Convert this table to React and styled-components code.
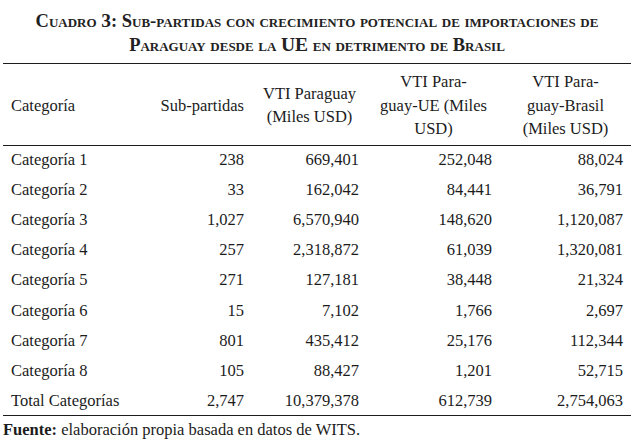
import React from "react";
import styled, { createGlobalStyle } from "styled-components";

const rows = [
  ["Categoría 1", "238", "669,401", "252,048", "88,024"],
  ["Categoría 2", "33", "162,042", "84,441", "36,791"],
  ["Categoría 3", "1,027", "6,570,940", "148,620", "1,120,087"],
  ["Categoría 4", "257", "2,318,872", "61,039", "1,320,081"],
  ["Categoría 5", "271", "127,181", "38,448", "21,324"],
  ["Categoría 6", "15", "7,102", "1,766", "2,697"],
  ["Categoría 7", "801", "435,412", "25,176", "112,344"],
  ["Categoría 8", "105", "88,427", "1,201", "52,715"],
  ["Total Categorías", "2,747", "10,379,378", "612,739", "2,754,063"],
];

const App = () => {
  return (
    <>
      <GlobalStyle />
      <Page>
        <Title>
          Cuadro <Big>3</Big>: Sub-partidas con crecimiento potencial de importaciones de
          <br />
          Paraguay desde la <Big>UE</Big> en detrimento de Brasil
        </Title>
        <Table>
          <colgroup>
            <col style={{ width: 143 }} />
            <col style={{ width: 106 }} />
            <col style={{ width: 115 }} />
            <col style={{ width: 133 }} />
            <col style={{ width: 131 }} />
          </colgroup>
          <thead>
            <tr>
              <Th $left>Categoría</Th>
              <Th $right>Sub-partidas</Th>
              <Th>
                VTI Paraguay
                <br />
                (Miles USD)
              </Th>
              <Th>
                VTI Para-
                <br />
                guay-UE (Miles
                <br />
                USD)
              </Th>
              <Th>
                VTI Para-
                <br />
                guay-Brasil
                <br />
                (Miles USD)
              </Th>
            </tr>
          </thead>
          <tbody>
            {rows.map((r) => (
              <Row key={r[0]}>
                {r.map((c, i) => (
                  <Td key={i} $left={i === 0}>
                    {c}
                  </Td>
                ))}
              </Row>
            ))}
          </tbody>
        </Table>
        <Source>
          <b>Fuente:</b> elaboración propia basada en datos de WITS.
        </Source>
      </Page>
    </>
  );
};
export default App;

const serif = `"Liberation Serif", "Times New Roman", serif`;

const GlobalStyle = createGlobalStyle`
  body {
    margin: 0;
    background: #fff;
    color: #1c1c1c;
    font-family: ${serif};
  }
`;

const Page = styled.div`
  width: 634px;
  height: 443px;
  padding: 0 3px;
  box-sizing: border-box;
  font-family: ${serif};
`;

const Title = styled.h1`
  margin: 0;
  padding-top: 9px;
  height: 63px;
  box-sizing: border-box;
  text-align: center;
  font-family: ${serif};
  font-size: 18.5px;
  line-height: 23px;
  font-weight: bold;
  font-variant: small-caps;
  color: #222;
`;

const Big = styled.span`
  font-size: 19.5px;
`;

const Table = styled.table`
  width: 628px;
  table-layout: fixed;
  border-collapse: collapse;
  font-family: ${serif};
  font-size: 16.5px;
  color: #1c1c1c;
  border-top: 1.5px solid #1c1c1c;
  border-bottom: 1.5px solid #1c1c1c;
`;

const Th = styled.th`
  font-family: ${serif};
  font-weight: normal;
  font-size: 16.5px;
  padding: 6px 8px 4px;
  line-height: 23.5px;
  height: 80px;
  box-sizing: border-box;
  text-align: ${(p) => (p.$left ? "left" : p.$right ? "right" : "center")};
  border-bottom: 1.5px solid #1c1c1c;
  vertical-align: middle;
`;

const Row = styled.tr`
  height: 30.1px;
`;

const Td = styled.td`
  font-family: ${serif};
  font-size: 16.5px;
  padding: 0 8px;
  line-height: 20px;
  text-align: ${(p) => (p.$left ? "left" : "right")};
  white-space: nowrap;
`;

const Source = styled.div`
  font-family: ${serif};
  font-size: 16.5px;
  padding-top: 4px;
  line-height: 20px;
`;
